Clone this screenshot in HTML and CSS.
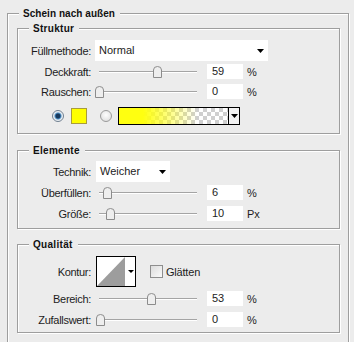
FILE: index.html
```html
<!DOCTYPE html>
<html lang="de">

<head>
    <meta charset="UTF-8">
    <title>Schein nach außen</title>
    <link rel="stylesheet" href="styles.css">
</head>

<body>
    <section class="group outer">
        <div class="group-title title">Schein nach außen</div>

        <section class="group struktur">
            <div class="group-title">Struktur</div>
            <div class="row tall">
                <span class="label">Füllmethode:</span>
                <div class="dropdown wide"><span>Normal</span><svg class="caret" width="7" height="4"><polygon points="0,0 7,0 3.5,4" /></svg></div>
            </div>
            <div class="row tall">
                <span class="label">Deckkraft:</span>
                <div class="slider"><svg class="thumb" style="left:58px" width="9" height="12"><path d="M0.5,11.5 L0.5,4 Q0.5,0.5 4.5,0.5 Q8.5,0.5 8.5,4 L8.5,11.5 Z" /></svg></div>
                <div class="field">59</div>
                <span class="unit">%</span>
            </div>
            <div class="row short">
                <span class="label">Rauschen:</span>
                <div class="slider"><svg class="thumb" style="left:0px" width="9" height="12"><path d="M0.5,11.5 L0.5,4 Q0.5,0.5 4.5,0.5 Q8.5,0.5 8.5,4 L8.5,11.5 Z" /></svg></div>
                <div class="field">0</div>
                <span class="unit">%</span>
            </div>
            <div class="row colors">
                <span class="radio checked"></span>
                <span class="swatch"></span>
                <span class="radio"></span>
                <div class="gradient">
                    <span class="preview"></span>
                    <span class="drop"><svg class="caret" width="7" height="4"><polygon points="0,0 7,0 3.5,4" /></svg></span>
                </div>
            </div>
        </section>

        <section class="group elemente">
            <div class="group-title">Elemente</div>
            <div class="row tall">
                <span class="label">Technik:</span>
                <div class="dropdown narrow"><span>Weicher</span><svg class="caret" width="7" height="4"><polygon points="0,0 7,0 3.5,4" /></svg></div>
            </div>
            <div class="row tall">
                <span class="label">Überfüllen:</span>
                <div class="slider"><svg class="thumb" style="left:8px" width="9" height="12"><path d="M0.5,11.5 L0.5,4 Q0.5,0.5 4.5,0.5 Q8.5,0.5 8.5,4 L8.5,11.5 Z" /></svg></div>
                <div class="field">6</div>
                <span class="unit">%</span>
            </div>
            <div class="row tall">
                <span class="label">Größe:</span>
                <div class="slider"><svg class="thumb" style="left:11px" width="9" height="12"><path d="M0.5,11.5 L0.5,4 Q0.5,0.5 4.5,0.5 Q8.5,0.5 8.5,4 L8.5,11.5 Z" /></svg></div>
                <div class="field">10</div>
                <span class="unit">Px</span>
            </div>
        </section>

        <section class="group qualitaet">
            <div class="group-title">Qualität</div>
            <div class="row kontur">
                <span class="label">Kontur:</span>
                <svg class="curve" width="40" height="31">
                    <rect x="0.5" y="0.5" width="39" height="30" fill="#fff" stroke="#000" />
                    <polygon points="1,30 29,1 29,30" fill="#9d9d9d" />
                    <polygon points="32,14 38,14 35,17" fill="#000" />
                </svg>
                <span class="checkbox"></span>
                <span class="check-label">Glätten</span>
            </div>
            <div class="row tall first">
                <span class="label">Bereich:</span>
                <div class="slider"><svg class="thumb" style="left:52px" width="9" height="12"><path d="M0.5,11.5 L0.5,4 Q0.5,0.5 4.5,0.5 Q8.5,0.5 8.5,4 L8.5,11.5 Z" /></svg></div>
                <div class="field">53</div>
                <span class="unit">%</span>
            </div>
            <div class="row tall">
                <span class="label">Zufallswert:</span>
                <div class="slider"><svg class="thumb" style="left:1px" width="9" height="12"><path d="M0.5,11.5 L0.5,4 Q0.5,0.5 4.5,0.5 Q8.5,0.5 8.5,4 L8.5,11.5 Z" /></svg></div>
                <div class="field">0</div>
                <span class="unit">%</span>
            </div>
        </section>
    </section>
</body>

</html>
```

FILE: styles.css
```css
html {
    overflow: hidden;
}

body {
    margin: 0;
    background-color: #ececec;
    font-family: "Liberation Sans", Arial, sans-serif;
    font-size: 11px;
    color: #1c1c1c;
}

/* etched group box, title sits on the top line */
.group {
    border: 1px solid #9e9e9e;
    box-shadow: inset 1px 1px 0 #fff, 1px 1px 0 #fff;
}

.group-title {
    width: fit-content;
    margin: -7px 0 5px 11px;
    padding: 0 5px 0 4px;
    line-height: 13px;
    font-size: 10px;
    font-weight: bold;
    letter-spacing: 0.3px;
    background-color: #ececec;
    color: #111;
}

.outer {
    width: 342px;
    margin: 13px 0 0 7px;
    box-sizing: border-box;
    padding: 0 8px 9px 9px;
    border-bottom: none;
}

.outer > .title {
    margin: -7px 0 0 2px;
    letter-spacing: 0.05px;
}

.struktur {
    margin-top: 8px;
    padding-bottom: 8px;
}

.elemente {
    margin-top: 16px;
    padding-bottom: 4px;
}

.elemente > .group-title {
    margin-bottom: 4px;
}

.qualitaet {
    margin-top: 15px;
    padding-bottom: 2px;
}

.row {
    display: flex;
    align-items: center;
}

.row.tall {
    height: 21px;
}

.row.short {
    height: 19px;
}

.row.first {
    margin-top: 1px;
}

.label {
    width: 73px;
    margin-right: 4px;
    text-align: right;
    letter-spacing: -0.3px;
    white-space: nowrap;
}

.dropdown {
    position: relative;
    height: 21px;
    line-height: 21px;
    padding-left: 4px;
    box-sizing: border-box;
    background-color: #fff;
}

.dropdown.wide {
    width: 173px;
}

.dropdown.narrow {
    width: 74px;
    margin-left: 1px;
}

.dropdown .caret {
    position: absolute;
    right: 4px;
    top: 9px;
}

.slider {
    position: relative;
    width: 106px;
    height: 14px;
    margin-right: 6px;
}

.slider::before {
    content: "";
    position: absolute;
    left: 4px;
    right: 4px;
    top: 6px;
    height: 1px;
    background-color: #a4a4a4;
    box-shadow: 0 1px 0 #fff;
}

.thumb {
    position: absolute;
    top: 1px;
}

.thumb path {
    fill: #eeeeee;
    stroke: #8c8c8c;
}

.field {
    width: 36px;
    height: 15px;
    line-height: 15px;
    padding-left: 5px;
    box-sizing: border-box;
    background-color: #fff;
}

.unit {
    margin-left: 4px;
}

.colors {
    height: 18px;
    margin-top: 6px;
}

.radio {
    width: 12px;
    height: 12px;
    box-sizing: border-box;
    border-radius: 50%;
    border: 1px solid #9a9a9a;
    background: radial-gradient(circle at 50% 40%, #fdfdfd, #d9d9d9);
}

.radio.checked {
    margin-left: 34px;
    border-color: #6f7f90;
    background: radial-gradient(circle, #17395e 0 2px, #4f8fc4 3px, #dfe9f2 4px, #f4f4f4 5px);
}

.swatch {
    width: 16px;
    height: 16px;
    box-sizing: border-box;
    margin: 0 13px 0 7px;
    border: 1px solid #a99c3c;
    background-color: #ffff00;
}

.gradient {
    display: flex;
    width: 122px;
    height: 18px;
    margin-left: 6px;
    box-sizing: border-box;
    border: 1px solid #000;
}

.gradient .preview {
    flex: 1;
    background-image:
        linear-gradient(to right, #ffff10 22%, rgba(255, 255, 16, 0) 72%),
        conic-gradient(#cfcfcf 25%, #fff 0 50%, #cfcfcf 0 75%, #fff 0);
    background-size: 100% 100%, 8px 8px;
}

.gradient .drop {
    position: relative;
    width: 10px;
    border-left: 1px solid #000;
    background-color: #f2f2f2;
}

.gradient .caret {
    position: absolute;
    left: 2px;
    top: 6px;
}

.kontur {
    height: 31px;
}

.kontur .label {
    margin-right: 5px;
}

.checkbox {
    width: 13px;
    height: 13px;
    box-sizing: border-box;
    margin-left: 14px;
    border: 1px solid #8e8e8e;
    background: linear-gradient(135deg, #dcdcdc, #fafafa);
}

.check-label {
    margin-left: 3px;
    letter-spacing: -0.2px;
}
```
